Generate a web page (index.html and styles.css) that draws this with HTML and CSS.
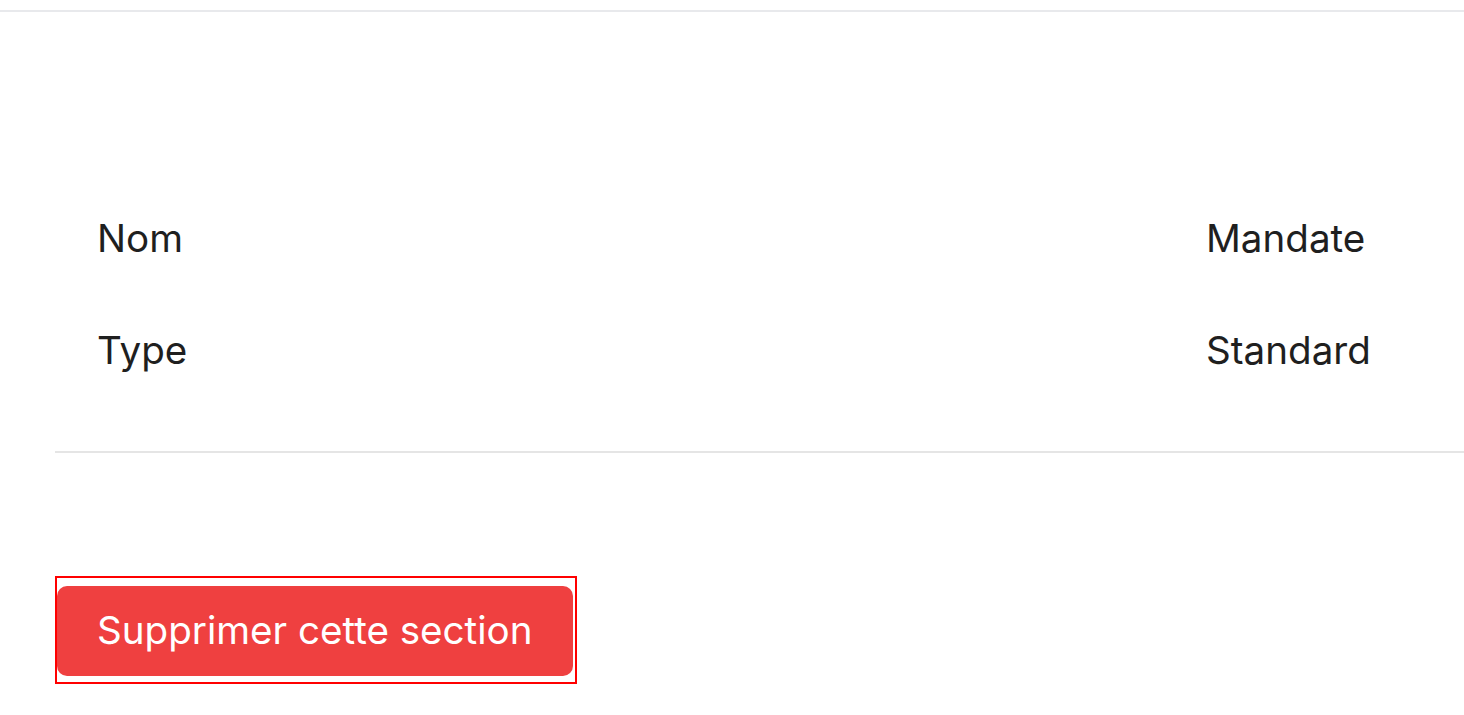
FILE: index.html
```html
<!DOCTYPE html>
<html lang="fr">
<head>
<meta charset="utf-8">
<link rel="stylesheet" href="styles.css">
</head>
<body>
<div class="page">
  <div class="top-rule"></div>
  <section class="section">
    <dl class="details">
      <div class="row">
        <dt class="label">Nom</dt>
        <dd class="value">Mandate</dd>
      </div>
      <div class="row">
        <dt class="label">Type</dt>
        <dd class="value">Standard</dd>
      </div>
    </dl>
    <div class="actions">
      <div class="highlight">
        <button class="danger-btn" type="button">Supprimer cette section</button>
      </div>
    </div>
  </section>
</div>
</body>
</html>
```

FILE: styles.css
```css
* { box-sizing: border-box; }
html, body { margin: 0; padding: 0; background: #ffffff; }
body {
  font-family: Inter, "Noto Sans", "Liberation Sans", sans-serif;
  color: #1f1f1f;
  overflow: hidden;
}
.page {
  width: 1464px;
  height: 715px;
  padding-top: 10px;
}
.top-rule {
  height: 2px;
  background: #e8e9ec;
  width: 100%;
}
.section {
  margin-left: 55px;
}
.details {
  margin: 0;
  padding: 202px 0 77px 42px;
  border-bottom: 2px solid #e5e5e5;
}
.row {
  display: grid;
  grid-template-columns: 1109px 1fr;
  height: 112px;
  align-items: start;
}
.row:last-child { height: auto; }
.label, .value {
  margin: 0;
  font-size: 38.6px;
  line-height: 48px;
  font-weight: 400;
}
.actions {
  padding-top: 123px;
}
.highlight {
  display: inline-block;
  border: 2px solid #ff0000;
  padding: 8px 2px 6px 0;
}
.danger-btn {
  display: block;
  font-family: inherit;
  font-size: 38.6px;
  line-height: 48px;
  color: #ffffff;
  background: #ef4040;
  border: none;
  border-radius: 10px;
  padding: 20px 40px 22px 40px;
  cursor: pointer;
}
```
